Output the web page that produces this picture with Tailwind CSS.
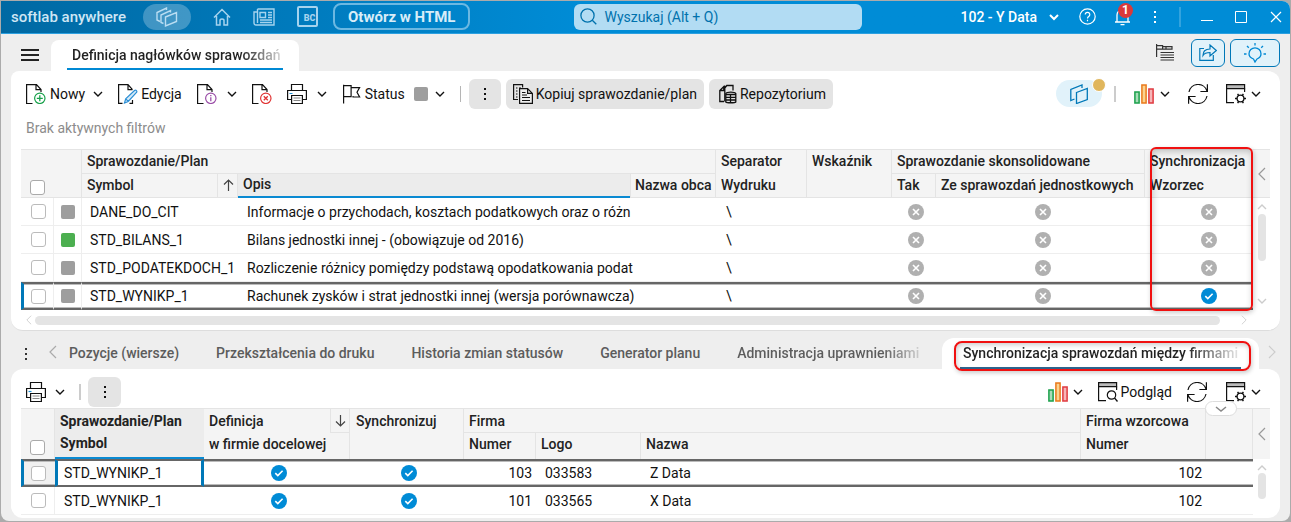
<!DOCTYPE html>
<html lang="pl">
<head>
  <meta charset="UTF-8" />
  <meta name="viewport" content="width=device-width, initial-scale=1.0"/>
  <title>Softlab anywhere - Definicja nagłówków sprawozdań</title>
  <script src="https://cdn.jsdelivr.net/npm/@tailwindcss/browser@4"></script>
</head>
<body class="h-screen flex flex-col bg-[#ababab] p-px font-['Roboto',sans-serif] text-sm leading-5 text-[#111] overflow-hidden">

  <!-- Icon set -->
  <svg class="hidden">
    <symbol id="i-down" viewBox="0 0 10 10"><path d="M1 3l4 4 4-4" fill="none" stroke="currentColor" stroke-width="1.4"/></symbol>
    <symbol id="i-left" viewBox="0 0 10 14"><path d="M8 1L2 7l6 6" fill="none" stroke="currentColor" stroke-width="1.2"/></symbol>
    <symbol id="i-dots" viewBox="0 0 4 14"><path d="M1 1h2v2H1zM1 6h2v2H1zM1 11h2v2H1z" fill="currentColor"/></symbol>
    <symbol id="i-doc" viewBox="0 0 20 20"><path d="M6.500 19.500H.6V.6h9.900l4.500 5V8M10 .6v5h5" fill="none" stroke="currentColor" stroke-width="1.2"/></symbol>
    <symbol id="i-new" viewBox="0 0 20 20"><use href="#i-doc"/><circle cx="13.800" cy="14.300" r="5.200" fill="none" stroke="#17a04a" stroke-width="1.200"/><path d="M13.800 11.300v6M10.800 14.300h6" stroke="#17a04a" stroke-width="1.300"/></symbol>
    <symbol id="i-edit" viewBox="0 0 20 20"><path d="M4.500 19.400H.6V.6h9.400l4.500 5M10 .6v5h4.500M11.500 19.400h3V16" fill="none" stroke="currentColor" stroke-width="1.200"/><path d="M6.500 19l1.200-4.200L16.500 6.500c1.500-1 3 .5 2 2l-8.300 9zM7.800 14.800l2.400 2.600" fill="#d6ebf8" stroke="#2d8fd5" stroke-width="1.200"/></symbol>
    <symbol id="i-info" viewBox="0 0 20 20"><use href="#i-doc"/><circle cx="13.800" cy="14.300" r="5.200" fill="none" stroke="#9b4fa8" stroke-width="1.200"/><path d="M13.800 13.300v4M13.800 11v1.300" stroke="#9b4fa8" stroke-width="1.300"/></symbol>
    <symbol id="i-del" viewBox="0 0 20 20"><use href="#i-doc"/><circle cx="13.800" cy="14.300" r="5.200" fill="none" stroke="#e03535" stroke-width="1.200"/><path d="M11.800 12.300l4 4M15.800 12.300l-4 4" stroke="#e03535" stroke-width="1.300"/></symbol>
    <symbol id="i-print" viewBox="0 0 20 20"><path d="M4.500 6.500v-6h11v6M4 15.500H.6v-9h18.800v9H16M4.600 11.500h10.800v8H4.600z" fill="none" stroke="currentColor" stroke-width="1.200"/><path d="M2.500 9.500h3" stroke="#1b8ed4" stroke-width="1.200"/><path d="M6.500 14h7M6.500 16.500h7" stroke="#888" stroke-width="1.200"/></symbol>
    <symbol id="i-flag" viewBox="0 0 20 20"><path d="M1.600 19.500V.8M1.600 1.600h7.500v11H1.600M9.100 3.600h8.500l-2.600 4.700 2.600 4.700H11v-1" fill="none" stroke="currentColor" stroke-width="1.200"/></symbol>
    <symbol id="i-copy" viewBox="0 0 20 20"><path d="M5 15.500H.6V.6h9v3" fill="none" stroke="currentColor" stroke-width="1.200"/><path d="M3 4h1.500M3 7h1.500M3 10h1.500M3 13h1.500M6 4h2" stroke="currentColor"/><path d="M6.600 4.600h8l4.800 4.800v10H6.600zM14.600 4.600v4.800h4.800" fill="#eee" stroke="currentColor" stroke-width="1.200"/><path d="M9 8.500h3.500M9 11h5M9 13.500h8M9 16.500h8" stroke="currentColor"/></symbol>
    <symbol id="i-repo" viewBox="0 0 18 20"><path d="M5 17.500H.8V6.500l4-4V6.500H.8M4.800 2.500h1V17.500M5.800 4l2-2.500H14v5" fill="none" stroke="currentColor" stroke-width="1.300"/><path d="M6.800 9.500c1-1.800 9-1.800 10 0v8.500c-1 1-9 1-10 0zM6.800 10.500h10M6.800 13.300h10M6.800 16h10M11.500 10.500v8" fill="none" stroke="currentColor" stroke-width="1.300"/></symbol>
    <symbol id="i-chart" viewBox="0 0 20 20"><path d="M.9 8.100h4.200v11H.9z" fill="#a8dcb8" stroke="#1aa04b" stroke-width="1.500"/><path d="M7.900.9h4.200v18.200H7.900z" fill="#fbd38f" stroke="#ea7a1c" stroke-width="1.500"/><path d="M14.900 5.100h4.200v14h-4.200z" fill="#f6b6b8" stroke="#e03a40" stroke-width="1.500"/></symbol>
    <symbol id="i-refresh" viewBox="0 0 20 20"><path d="M1 8A9.300 9.300 0 0 1 19 7M19.400.3v7.200h-7M19 12A9.300 9.300 0 0 1 1 13M.6 19.700v-7.200h7" fill="none" stroke="currentColor" stroke-width="1.200"/></symbol>
    <symbol id="i-win" viewBox="0 0 20 20"><path d="M.6.6h18v4H.6z" fill="#bbb" stroke="currentColor" stroke-width="1.200"/><path d="M.6 4.600v14H8M18.600 4.600V8" fill="none" stroke="currentColor" stroke-width="1.200"/></symbol>
    <symbol id="i-cog" viewBox="0 0 20 20"><use href="#i-win"/><circle cx="14.500" cy="14.500" r="3.400" fill="none" stroke="currentColor" stroke-width="1.300"/><path d="M9 14.500h2M18 14.500h2M11.600 9.800l1.200 1.900M17.400 9.800l-1.200 1.900M11.600 19.200l1.200-1.900M17.400 19.200l-1.200-1.900" stroke="currentColor" stroke-width="1.400"/></symbol>
    <symbol id="i-look" viewBox="0 0 20 20"><use href="#i-win"/><circle cx="13.500" cy="13" r="4.200" fill="none" stroke="currentColor" stroke-width="1.200"/><path d="M16.500 16l3 3.500" stroke="currentColor" stroke-width="1.300"/></symbol>
    <symbol id="i-no" viewBox="0 0 16 16"><circle cx="8" cy="8" r="8" fill="#b0b0b0"/><path d="M5 5l6 6M11 5l-6 6" stroke="#fff" stroke-width="1.600"/></symbol>
    <symbol id="i-yes" viewBox="0 0 16 16"><circle cx="8" cy="8" r="8" fill="#008bd6"/><path d="M4.300 8.200l2.500 2.400 4.800-4.800" fill="none" stroke="#fff" stroke-width="1.600"/></symbol>
  </svg>

  <div class="flex-1 min-h-0 flex flex-col bg-[#eeeeee] rounded-lg rounded-tl-none overflow-hidden">

    <!-- Title bar -->
    <header class="h-[33px] shrink-0 flex items-center text-white bg-linear-to-r from-[#0069a3] to-[#008cd6] to-45% border-b border-[#2ba0e0] pb-px pl-2.5 pr-2">
      <span class="text-[15px] font-medium text-[#cfe6f4] w-32">softlab anywhere</span>
      <button aria-label="Okna" class="ml-1 w-12 h-[26px] rounded-full bg-white/25 flex items-center justify-center text-[#b9ddf2]">
        <svg class="w-[22px] h-5" viewBox="0 0 22 20" fill="none" stroke="currentColor" stroke-width="1.400"><path d="M4 14.500L1 13V5.500L10.500 1v2M7.500 16.500L5 15.500V8l9.500-4.500v2M9.500 10l11-4.500v9L9.500 19z"/></svg>
      </button>
      <nav class="flex items-center gap-[22px] ml-[22px] text-[#a5d3ee]">
        <a href="#" aria-label="Start"><svg class="w-[18px] h-[18px]" viewBox="0 0 18 18" fill="none" stroke="currentColor" stroke-width="1.500"><path d="M1 9.500L9 1.500l8 8M3.500 8v9H7v-4.500c0-2 4-2 4 0V17h3.500V8"/></svg></a>
        <a href="#" aria-label="Aktualności"><svg class="w-[22px] h-[18px]" viewBox="0 0 22 18" fill="none" stroke="currentColor" stroke-width="1.400"><path d="M4.500 1H21v16H3a2 2 0 0 1-2-2V4h3.500v11M4.500 15V1M7 4.500h5.500v5H7zM15 4.500h4M15 7h4M15 9.500h4M7 12h12M7 14.500h12"/></svg></a>
        <a href="#" aria-label="BC" class="w-[21px] h-[21px] border-2 border-current rounded-xs text-[9px] leading-3 font-black flex items-end justify-center pl-1 pb-px">BC</a>
      </nav>
      <button class="ml-[15px] h-[27px] px-[13px] border-2 border-[#6bb8e2] rounded-lg font-bold text-[15px] leading-5 text-[#d8edf8] whitespace-nowrap">Otwórz w HTML</button>
      <div class="flex-1"></div>
      <div class="relative w-72">
        <svg class="absolute left-1.5 top-1 w-[17px] h-[17px] text-[#0072ad]" viewBox="0 0 17 17" fill="none" stroke="currentColor" stroke-width="1.300"><circle cx="7.500" cy="7.500" r="6.600"/><path d="M12.300 12.300l4 4"/></svg>
        <input type="text" aria-label="Wyszukaj" placeholder="Wyszukaj (Alt + Q)" class="block w-full h-[26px] rounded-md bg-[#b2dcf3] pl-[30px] text-[#0072ad] placeholder:text-[#0072ad]" />
      </div>
      <button class="ml-[98px] flex items-center gap-3 font-medium whitespace-nowrap">102 - Y Data
        <svg class="w-2.5 h-2.5" viewBox="0 0 10 10"><path d="M1 3l4 4 4-4" fill="none" stroke="currentColor" stroke-width="2"/></svg>
      </button>
      <button aria-label="Pomoc" class="ml-5"><svg class="w-[17px] h-[17px]" viewBox="0 0 17 17" fill="none" stroke="currentColor" stroke-width="1.200"><circle cx="8.500" cy="8.500" r="7.700"/><path d="M6.200 6.600a2.300 2.300 0 1 1 3.500 2c-.9.600-1.200.9-1.200 2M8.500 11.800v1.400"/></svg></button>
      <button aria-label="Powiadomienia" class="relative ml-[18px]">
        <svg class="w-[17px] h-[19px]" viewBox="0 0 17 19" fill="none" stroke="currentColor" stroke-width="1.300"><path d="M1 15h15M3 15V8a5.500 5.500 0 0 1 11 0v7M6.500 17.700h4M8.500 0v2.500"/></svg>
        <span class="absolute -top-1 left-1 w-[15px] h-[15px] rounded-full bg-[#d93a3a] text-xs leading-[15px] font-bold">1</span>
      </button>
      <button aria-label="Więcej" class="ml-[22px]"><svg class="w-1 h-3.5"><use href="#i-dots"/></svg></button>
      <span class="ml-[22px] w-0.5 h-5 bg-white/20"></span>
      <button aria-label="Minimalizuj" class="ml-5"><svg class="w-3 h-3" viewBox="0 0 12 12" stroke="currentColor"><path d="M0 9.500h12"/></svg></button>
      <button aria-label="Maksymalizuj" class="ml-[22px]"><svg class="w-3 h-3" viewBox="0 0 12 12" fill="none" stroke="currentColor"><path d="M.5.5h11v11H.5z"/></svg></button>
      <button aria-label="Zamknij" class="ml-[23px]"><svg class="w-3 h-3" viewBox="0 0 12 12" stroke="currentColor" stroke-width="1.200"><path d="M1 1l10 10M11 1L1 11"/></svg></button>
    </header>

    <!-- Document tabs -->
    <div class="h-[37px] shrink-0 flex items-end pl-5 pr-2.5">
      <button aria-label="Menu" class="w-[18px] h-3 mb-2.5 border-y-2 border-[#222] flex items-center"><span class="block w-full h-0.5 bg-[#222]"></span></button>
      <a href="#" class="ml-3 h-[31px] px-4 pt-[5px] bg-white rounded-t-lg whitespace-nowrap">
        <span class="block w-[216px] h-[25px] px-[5px] border-b-2 border-[#0089d4] font-medium overflow-hidden bg-linear-to-r from-[#222] from-80% to-[#ccc] to-98% bg-clip-text text-transparent">Definicja nagłówków sprawozdań</span>
      </a>
      <div class="flex-1"></div>
      <div class="flex items-center self-center gap-[5px]">
        <button aria-label="Widok" class="mr-3"><svg class="w-[19px] h-[17px]" viewBox="0 0 19 17" fill="none" stroke="#333" stroke-width="1.200"><path d="M1.600 13V0M1.600 1.600h6v3.500h-6M7.600 2.600H17v2.500H7.600M11 2.600v2.500M5.500 8.500H19M5.500 11H19M5.500 13.500H19M5.500 16H19"/></svg></button>
        <button aria-label="Udostępnij" class="w-[34px] h-7 border border-[#0078b8] rounded-md bg-[#e1f2fa] text-[#0078b8] flex items-center justify-center"><svg class="w-[18px] h-[17px]" viewBox="0 0 18 17" fill="none" stroke="currentColor" stroke-width="1.200"><path d="M5 4.500H.8v11.800h13.500V11M4 11.500c0-4 2-6.500 7-6.500V1l6.300 5.500L11 12V8.500C7 8.500 5.500 9 4 11.500z"/></svg></button>
        <button aria-label="Podpowiedzi" class="w-[50px] h-7 border border-[#0078b8] rounded-md bg-[#e1f2fa] text-[#0089d4] flex items-center justify-center"><svg class="w-[22px] h-5" viewBox="0 0 22 20" fill="none" stroke="currentColor" stroke-width="1.300"><path d="M9.500 16c-3-1-4.500-3-4.500-5.200a6 6 0 0 1 12 0c0 2.200-1.500 4.200-4 5.200L11 19zM11 0v2.500M3 3l1.800 1.800M19 3l-1.800 1.800M0 11h2.500M19.500 11H22"/></svg></button>
      </div>
    </div>

    <!-- Report definitions -->
    <section class="shrink-0 mx-2.5 px-2.5 bg-white rounded-xl rounded-tl-lg border-b border-[#ddd]">
      <div class="flex items-center gap-[15px] h-[45px] pl-[5px] whitespace-nowrap">
        <div class="flex items-center gap-2">
          <button class="flex items-center gap-1"><svg class="w-5 h-5"><use href="#i-new"/></svg>Nowy</button>
          <button aria-label="Nowy - opcje"><svg class="w-2.5 h-2.5"><use href="#i-down"/></svg></button>
        </div>
        <button class="flex items-center gap-[3px]"><svg class="w-5 h-5"><use href="#i-edit"/></svg>Edycja</button>
        <div class="flex items-center gap-2.5">
          <button aria-label="Informacje"><svg class="w-5 h-5"><use href="#i-info"/></svg></button>
          <button aria-label="Informacje - opcje"><svg class="w-2.5 h-2.5"><use href="#i-down"/></svg></button>
        </div>
        <button aria-label="Usuń"><svg class="w-5 h-5"><use href="#i-del"/></svg></button>
        <div class="flex items-center gap-2.5">
          <button aria-label="Drukuj"><svg class="w-5 h-5"><use href="#i-print"/></svg></button>
          <button aria-label="Drukuj - opcje"><svg class="w-2.5 h-2.5"><use href="#i-down"/></svg></button>
        </div>
        <div class="flex items-center gap-[7px]">
          <button class="flex items-center gap-[3px]"><svg class="w-5 h-5"><use href="#i-flag"/></svg>Status<span class="ml-1.5 w-3.5 h-3.5 rounded-xs bg-[#9e9e9e]"></span></button>
          <button aria-label="Status - opcje"><svg class="w-2.5 h-2.5"><use href="#i-down"/></svg></button>
        </div>
        <div class="flex items-center gap-[5px]">
          <span class="w-px h-4 bg-[#b5b5b5] mr-[3px]"></span>
          <button aria-label="Więcej" class="w-8 h-[30px] rounded-md bg-[#e4e4e4] flex items-center justify-center"><svg class="w-1 h-3.5"><use href="#i-dots"/></svg></button>
          <button class="h-[30px] px-[7px] rounded-md bg-[#e4e4e4] flex items-center gap-[3px]"><svg class="w-5 h-5"><use href="#i-copy"/></svg>Kopiuj sprawozdanie/plan</button>
          <button class="h-[30px] pl-2.5 pr-[7px] rounded-md bg-[#e4e4e4] flex items-center gap-[3px]"><svg class="w-[18px] h-5"><use href="#i-repo"/></svg>Repozytorium</button>
        </div>
        <div class="flex-1"></div>
        <div class="flex items-center gap-[18px] pr-[9px]">
          <button aria-label="Powiązania" class="relative w-[46px] h-[27px] -mr-1.5 rounded-full bg-[#e1f2fa] text-[#0078b8] flex items-center justify-center">
            <svg class="w-[18px] h-5" viewBox="0 0 18 20" fill="none" stroke="currentColor" stroke-width="1.300"><path d="M4.500 15L.8 16.500V5.500L12 1v3M6.500 8.500l10.800-4v11l-10.800 4z"/></svg>
            <span class="absolute -top-0.5 -right-1 w-3.5 h-3.5 rounded-full border border-white bg-[#e0b65c]"></span>
          </button>
          <span class="w-0.5 h-4 bg-[#ccc]"></span>
          <div class="flex items-center gap-1.5">
            <button aria-label="Wykres"><svg class="w-5 h-5"><use href="#i-chart"/></svg></button>
            <button aria-label="Wykres - opcje"><svg class="w-2.5 h-2.5"><use href="#i-down"/></svg></button>
          </div>
          <button aria-label="Odśwież"><svg class="w-5 h-5"><use href="#i-refresh"/></svg></button>
          <div class="flex items-center gap-[5px]">
            <button aria-label="Ustawienia"><svg class="w-5 h-5"><use href="#i-cog"/></svg></button>
            <button aria-label="Ustawienia - opcje"><svg class="w-2.5 h-2.5"><use href="#i-down"/></svg></button>
          </div>
        </div>
      </div>
      <p class="h-[33px] pt-0.5 pl-[5px] text-[#8c8c8c]">Brak aktywnych filtrów</p>

      <div class="flex">
        <div class="relative flex-1 min-w-0">
          <table class="w-full table-fixed border-separate border-spacing-0 whitespace-nowrap">
            <colgroup>
              <col class="w-[33px]"><col class="w-7"><col class="w-[135px]"><col class="w-[21px]"><col><col class="w-[86px]"><col class="w-[91px]"><col class="w-[85px]"><col class="w-11"><col class="w-[209px]"><col class="w-[108px]">
            </colgroup>
            <thead class="bg-[#f4f4f4] text-left text-[#222] [&_th]:font-medium [&_th]:border-[#e4e4e4] [&_th]:p-0 [&_th]:pb-0.5 [&_th]:pl-[5px]">
              <tr class="h-[25px] [&_th]:border-t">
                <th colspan="2" rowspan="2" class="border-b border-r align-bottom"><input type="checkbox" aria-label="Zaznacz wszystkie" class="block appearance-none w-[15px] h-[15px] ml-1 bg-white border border-[#aaa] rounded-[3px]" /></th>
                <th colspan="4" class="border-b border-r">Sprawozdanie/Plan</th>
                <th class="border-r">Separator</th>
                <th rowspan="2" class="border-r border-b align-top leading-[22px]">Wskaźnik</th>
                <th colspan="2" class="border-b border-r">Sprawozdanie skonsolidowane</th>
                <th>Synchronizacja</th>
              </tr>
              <tr class="h-[24px] [&_th]:border-b">
                <th>Symbol</th>
                <th class="border-l border-r"><svg class="w-[11px] h-3" viewBox="0 0 11 12" fill="none" stroke="#444" stroke-width="1.200"><path d="M5.500 12V1M1 5.500L5.500 1 10 5.500"/></svg></th>
                <th class="bg-[#ececec] !border-b-2 !border-b-[#0a8ad2]">Opis</th>
                <th class="border-l border-r !pl-1">Nazwa obca</th>
                <th class="border-r">Wydruku</th>
                <th class="border-r">Tak</th>
                <th class="border-r">Ze sprawozdań jednostkowych</th>
                <th>Wzorzec</th>
              </tr>
            </thead>
            <tbody class="[&_td]:h-7 [&_td]:p-0 [&_td]:border-[#eee] [&_td]:border-b [&_svg]:block [&_svg]:mx-auto [&_svg]:w-4 [&_svg]:h-4 [&_input]:appearance-none [&_input]:block [&_input]:w-[15px] [&_input]:h-[15px] [&_input]:ml-2.5 [&_input]:border [&_input]:border-[#bbb] [&_input]:rounded-[3px]">
              <tr>
                <td class="border-r"><input type="checkbox" aria-label="DANE_DO_CIT" /></td>
                <td class="border-r"><span class="block mx-auto w-3.5 h-3.5 rounded-xs bg-[#9e9e9e]"></span></td>
                <td colspan="2" class="!pl-2">DANE_DO_CIT</td>
                <td class="!pl-[9px]">Informacje o przychodach, kosztach podatkowych oraz o różn</td>
                <td></td><td class="!pl-2.5">\</td><td></td>
                <td class="!pl-1"><svg><use href="#i-no"/></svg></td>
                <td class="!pl-1"><svg><use href="#i-no"/></svg></td>
                <td class="!pl-5"><svg><use href="#i-no"/></svg></td>
              </tr>
              <tr>
                <td class="border-r"><input type="checkbox" aria-label="STD_BILANS_1" /></td>
                <td class="border-r"><span class="block mx-auto w-3.5 h-3.5 rounded-xs bg-[#4caf50]"></span></td>
                <td colspan="2" class="!pl-2">STD_BILANS_1</td>
                <td class="!pl-[9px]">Bilans jednostki innej - (obowiązuje od 2016)</td>
                <td></td><td class="!pl-2.5">\</td><td></td>
                <td class="!pl-1"><svg><use href="#i-no"/></svg></td>
                <td class="!pl-1"><svg><use href="#i-no"/></svg></td>
                <td class="!pl-5"><svg><use href="#i-no"/></svg></td>
              </tr>
              <tr>
                <td class="border-r"><input type="checkbox" aria-label="STD_PODATEKDOCH_1" /></td>
                <td class="border-r"><span class="block mx-auto w-3.5 h-3.5 rounded-xs bg-[#9e9e9e]"></span></td>
                <td colspan="2" class="!pl-2">STD_PODATEKDOCH_1</td>
                <td class="!pl-[9px]">Rozliczenie różnicy pomiędzy podstawą opodatkowania podat</td>
                <td></td><td class="!pl-2.5">\</td><td></td>
                <td class="!pl-1"><svg><use href="#i-no"/></svg></td>
                <td class="!pl-1"><svg><use href="#i-no"/></svg></td>
                <td class="!pl-5"><svg><use href="#i-no"/></svg></td>
              </tr>
              <tr class="[&_td]:!border-y-2 [&_td]:!border-y-[#666] [&_td]:shadow-[inset_0_1px_#bbb,inset_0_-1px_#bbb]">
                <td class="border-r !border-l-3 !border-l-[#0078b8]"><input type="checkbox" aria-label="STD_WYNIKP_1" class="!ml-[7px]" /></td>
                <td class="border-r"><span class="block mx-auto w-3.5 h-3.5 rounded-xs bg-[#9e9e9e]"></span></td>
                <td colspan="2" class="!pl-2">STD_WYNIKP_1</td>
                <td class="!pl-[9px]">Rachunek zysków i strat jednostki innej (wersja porównawcza)</td>
                <td></td><td class="!pl-2.5">\</td><td></td>
                <td class="!pl-1"><svg><use href="#i-no"/></svg></td>
                <td class="!pl-1"><svg><use href="#i-no"/></svg></td>
                <td class="!pl-5"><svg><use href="#i-yes"/></svg></td>
              </tr>
            </tbody>
          </table>
          <!-- Column highlight -->
          <div class="absolute -top-0.5 -bottom-px right-0 w-[103px] border-2 border-[#f01010] rounded-md shadow-[inset_1px_3px_6px_#0003,1px_2px_5px_#0003]"></div>
        </div>
        <div class="w-[17px] flex flex-col items-center">
          <button aria-label="Zwiń kolumny" class="w-full h-[49px] flex items-center justify-center bg-[#f4f4f4] border-y border-[#e4e4e4] text-[#999]"><svg class="w-2.5 h-3.5"><use href="#i-left"/></svg></button>
          <svg class="mt-1 w-2.5 h-2.5 rotate-180 text-[#ccc]"><use href="#i-down"/></svg>
          <div class="mt-0.5 w-2 h-[47px] rounded-full bg-[#e4e4e4]"></div>
          <svg class="mt-auto mb-1 w-2.5 h-2.5 text-[#ccc]"><use href="#i-down"/></svg>
        </div>
      </div>
      <div class="flex items-center h-5 pl-1 pr-[22px] text-[#ccc]">
        <svg class="w-2 h-2.5"><use href="#i-left"/></svg>
        <div class="ml-0.5 mr-5 flex-1 h-[9px] rounded-full bg-[#e4e4e4]"></div>
        <svg class="w-2 h-2.5 rotate-180"><use href="#i-left"/></svg>
      </div>
    </section>

    <!-- Detail tabs -->
    <nav class="h-[38px] shrink-0 flex items-end pl-[23px] pr-[13px] font-medium text-[#5c5c5c] whitespace-nowrap">
      <button aria-label="Zakładki" class="mb-2"><svg class="w-1 h-3.5 text-[#333]"><use href="#i-dots"/></svg></button>
      <button aria-label="Poprzednie" class="ml-5 mb-2.5"><svg class="w-2.5 h-3.5 text-[#aaa]"><use href="#i-left"/></svg></button>
      <div class="ml-[11px] mb-1.5 flex gap-[37px]">
        <a href="#">Pozycje (wiersze)</a>
        <a href="#">Przekształcenia do druku</a>
        <a href="#">Historia zmian statusów</a>
        <a href="#">Generator planu</a>
        <a href="#" class="bg-linear-to-r from-[#5c5c5c] from-80% to-[#ccc] bg-clip-text text-transparent">Administracja uprawnieniami</a>
      </div>
      <div class="flex-1"></div>
      <a href="#" class="relative h-[31px] px-[18px] pt-[5px] bg-white rounded-t-xl">
        <span class="block w-[281px] h-[26px] px-[3px] border-b-2 border-[#2f6690] bg-linear-to-r from-[#222] from-80% to-[#ddd] to-98% bg-clip-text text-transparent">Synchronizacja sprawozdań między firmami</span>
        <!-- Tab highlight -->
        <span class="absolute left-3 right-2 top-[3px] -bottom-0.5 border-2 border-[#f01010] rounded-lg shadow-[inset_1px_2px_5px_#0003,1px_2px_4px_#0003]"></span>
      </a>
      <button aria-label="Następne" class="ml-2 mb-2.5"><svg class="w-2.5 h-3.5 rotate-180 text-[#ccc]"><use href="#i-left"/></svg></button>
    </nav>

    <!-- Company synchronization -->
    <section class="flex-1 min-h-0 mx-2.5 px-2.5 mb-[3px] bg-white rounded-xl flex flex-col">
      <div class="flex items-center shrink-0 h-[39px] pt-1.5 pl-[5px] pr-[9px] whitespace-nowrap">
        <div class="flex items-center gap-[9px]">
          <button aria-label="Drukuj"><svg class="w-5 h-5"><use href="#i-print"/></svg></button>
          <button aria-label="Drukuj - opcje"><svg class="w-2.5 h-2.5"><use href="#i-down"/></svg></button>
        </div>
        <span class="ml-3.5 w-0.5 h-4 bg-[#ccc]"></span>
        <button aria-label="Więcej" class="ml-[7px] w-[33px] h-[30px] rounded-md bg-[#e4e4e4] flex items-center justify-center"><svg class="w-1 h-3.5"><use href="#i-dots"/></svg></button>
        <div class="flex-1"></div>
        <div class="flex items-center gap-[15px]">
          <div class="flex items-center gap-[5px]">
            <button aria-label="Wykres"><svg class="w-5 h-5"><use href="#i-chart"/></svg></button>
            <button aria-label="Wykres - opcje"><svg class="w-2.5 h-2.5"><use href="#i-down"/></svg></button>
          </div>
          <button class="flex items-center gap-[3px]"><svg class="w-5 h-5"><use href="#i-look"/></svg>Podgląd</button>
          <button aria-label="Odśwież"><svg class="w-5 h-5"><use href="#i-refresh"/></svg></button>
          <div class="ml-1 flex items-center gap-[5px]">
            <button aria-label="Ustawienia"><svg class="w-5 h-5"><use href="#i-cog"/></svg></button>
            <button aria-label="Ustawienia - opcje"><svg class="w-2.5 h-2.5"><use href="#i-down"/></svg></button>
          </div>
        </div>
      </div>

      <div class="relative flex flex-1 min-h-0">
        <button aria-label="Zwiń nagłówek" class="absolute -top-[7px] right-[33px] w-8 h-[15px] bg-white border border-[#ddd] rounded-full flex items-center justify-center text-[#888]"><svg class="w-3 h-1.5" viewBox="0 0 12 6" fill="none" stroke="currentColor" stroke-width="1.500"><path d="M1 1l5 4 5-4"/></svg></button>
        <div class="flex-1 min-w-0">
          <table class="w-full table-fixed border-separate border-spacing-0 whitespace-nowrap">
            <colgroup>
              <col class="w-[34px]"><col class="w-[149px]"><col class="w-[126px]"><col class="w-5"><col class="w-[114px]"><col class="w-[72px]"><col class="w-[105px]"><col><col class="w-[125px]"><col class="w-[47px]">
            </colgroup>
            <thead class="bg-[#f4f4f4] text-left text-[#222] [&_th]:font-medium [&_th]:border-[#e4e4e4] [&_th]:p-0 [&_th]:pl-[5px]">
              <tr class="h-[25px] [&_th]:border-t">
                <th rowspan="2" class="border-r align-bottom"><input type="checkbox" aria-label="Zaznacz wszystkie" class="block appearance-none w-[15px] h-[15px] ml-1 mb-1 bg-white border border-[#aaa] rounded-[3px]" /></th>
                <th class="bg-[#ececec] !font-bold">Sprawozdanie/Plan</th>
                <th>Definicja</th>
                <th class="border-l border-b border-r"><svg class="-ml-px w-[11px] h-3" viewBox="0 0 11 12" fill="none" stroke="#444" stroke-width="1.200"><path d="M5.500 0v11M1 6.500L5.500 11 10 6.500"/></svg></th>
                <th rowspan="2" class="border-r align-top leading-6 !pl-1.5">Synchronizuj</th>
                <th colspan="3" class="border-r border-b">Firma</th>
                <th class="border-r">Firma wzorcowa</th>
                <th rowspan="2" class="border-r"></th>
              </tr>
              <tr class="h-[26px] [&_th]:!pb-1">
                <th class="bg-[#ececec] border-b-2 !border-b-[#0a8ad2] !font-bold !pb-0.5">Symbol</th>
                <th colspan="2" class="border-r">w firmie docelowej</th>
                <th class="border-r">Numer</th>
                <th class="border-r">Logo</th>
                <th class="border-r">Nazwa</th>
                <th class="border-r">Numer</th>
              </tr>
            </thead>
            <tbody class="[&_td]:h-7 [&_td]:p-0 [&_td]:border-[#eee] [&_td]:border-b [&_svg]:block [&_svg]:mx-auto [&_svg]:w-4 [&_svg]:h-4 [&_input]:appearance-none [&_input]:block [&_input]:w-[15px] [&_input]:h-[15px] [&_input]:bg-white [&_input]:border [&_input]:border-[#bbb] [&_input]:rounded-[3px]">
              <tr class="[&_td]:!border-y-2 [&_td]:!border-y-[#666] [&_td]:shadow-[inset_0_1px_#bbb,inset_0_-1px_#bbb]">
                <td class="bg-[#f0f0f0] !border-l-3 !border-l-[#0078b8]"><input type="checkbox" aria-label="Firma 103" class="ml-[7px]" /></td>
                <td class="!pl-1.5 !border-3 !border-[#0078b8] !shadow-none">STD_WYNIKP_1</td>
                <td colspan="2" class="!pl-1"><svg><use href="#i-yes"/></svg></td>
                <td class="!pl-1"><svg><use href="#i-yes"/></svg></td>
                <td class="!pr-1 text-right">103</td>
                <td class="!pl-[9px]">033583</td>
                <td class="!pl-[9px]">Z Data</td>
                <td class="!pr-1 text-right">102</td>
                <td></td>
              </tr>
              <tr>
                <td class="border-r"><input type="checkbox" aria-label="Firma 101" class="ml-2.5" /></td>
                <td class="!pl-[9px]">STD_WYNIKP_1</td>
                <td colspan="2" class="!pl-1"><svg><use href="#i-yes"/></svg></td>
                <td class="!pl-1"><svg><use href="#i-yes"/></svg></td>
                <td class="!pr-1 text-right">101</td>
                <td class="!pl-[9px]">033565</td>
                <td class="!pl-[9px]">X Data</td>
                <td class="!pr-1 text-right">102</td>
                <td></td>
              </tr>
            </tbody>
          </table>
        </div>
        <div class="w-[17px] flex flex-col items-center">
          <button aria-label="Zwiń kolumny" class="w-full h-[51px] shrink-0 flex items-center justify-center bg-[#f4f4f4] border-t border-[#e4e4e4] text-[#999]"><svg class="w-2.5 h-3.5"><use href="#i-left"/></svg></button>
          <svg class="mt-1 w-2.5 h-2.5 rotate-180 text-[#ccc]"><use href="#i-down"/></svg>
          <div class="w-2 h-[26px] rounded-full bg-[#e4e4e4]"></div>
        </div>
      </div>
    </section>
  </div>

</body>
</html>
